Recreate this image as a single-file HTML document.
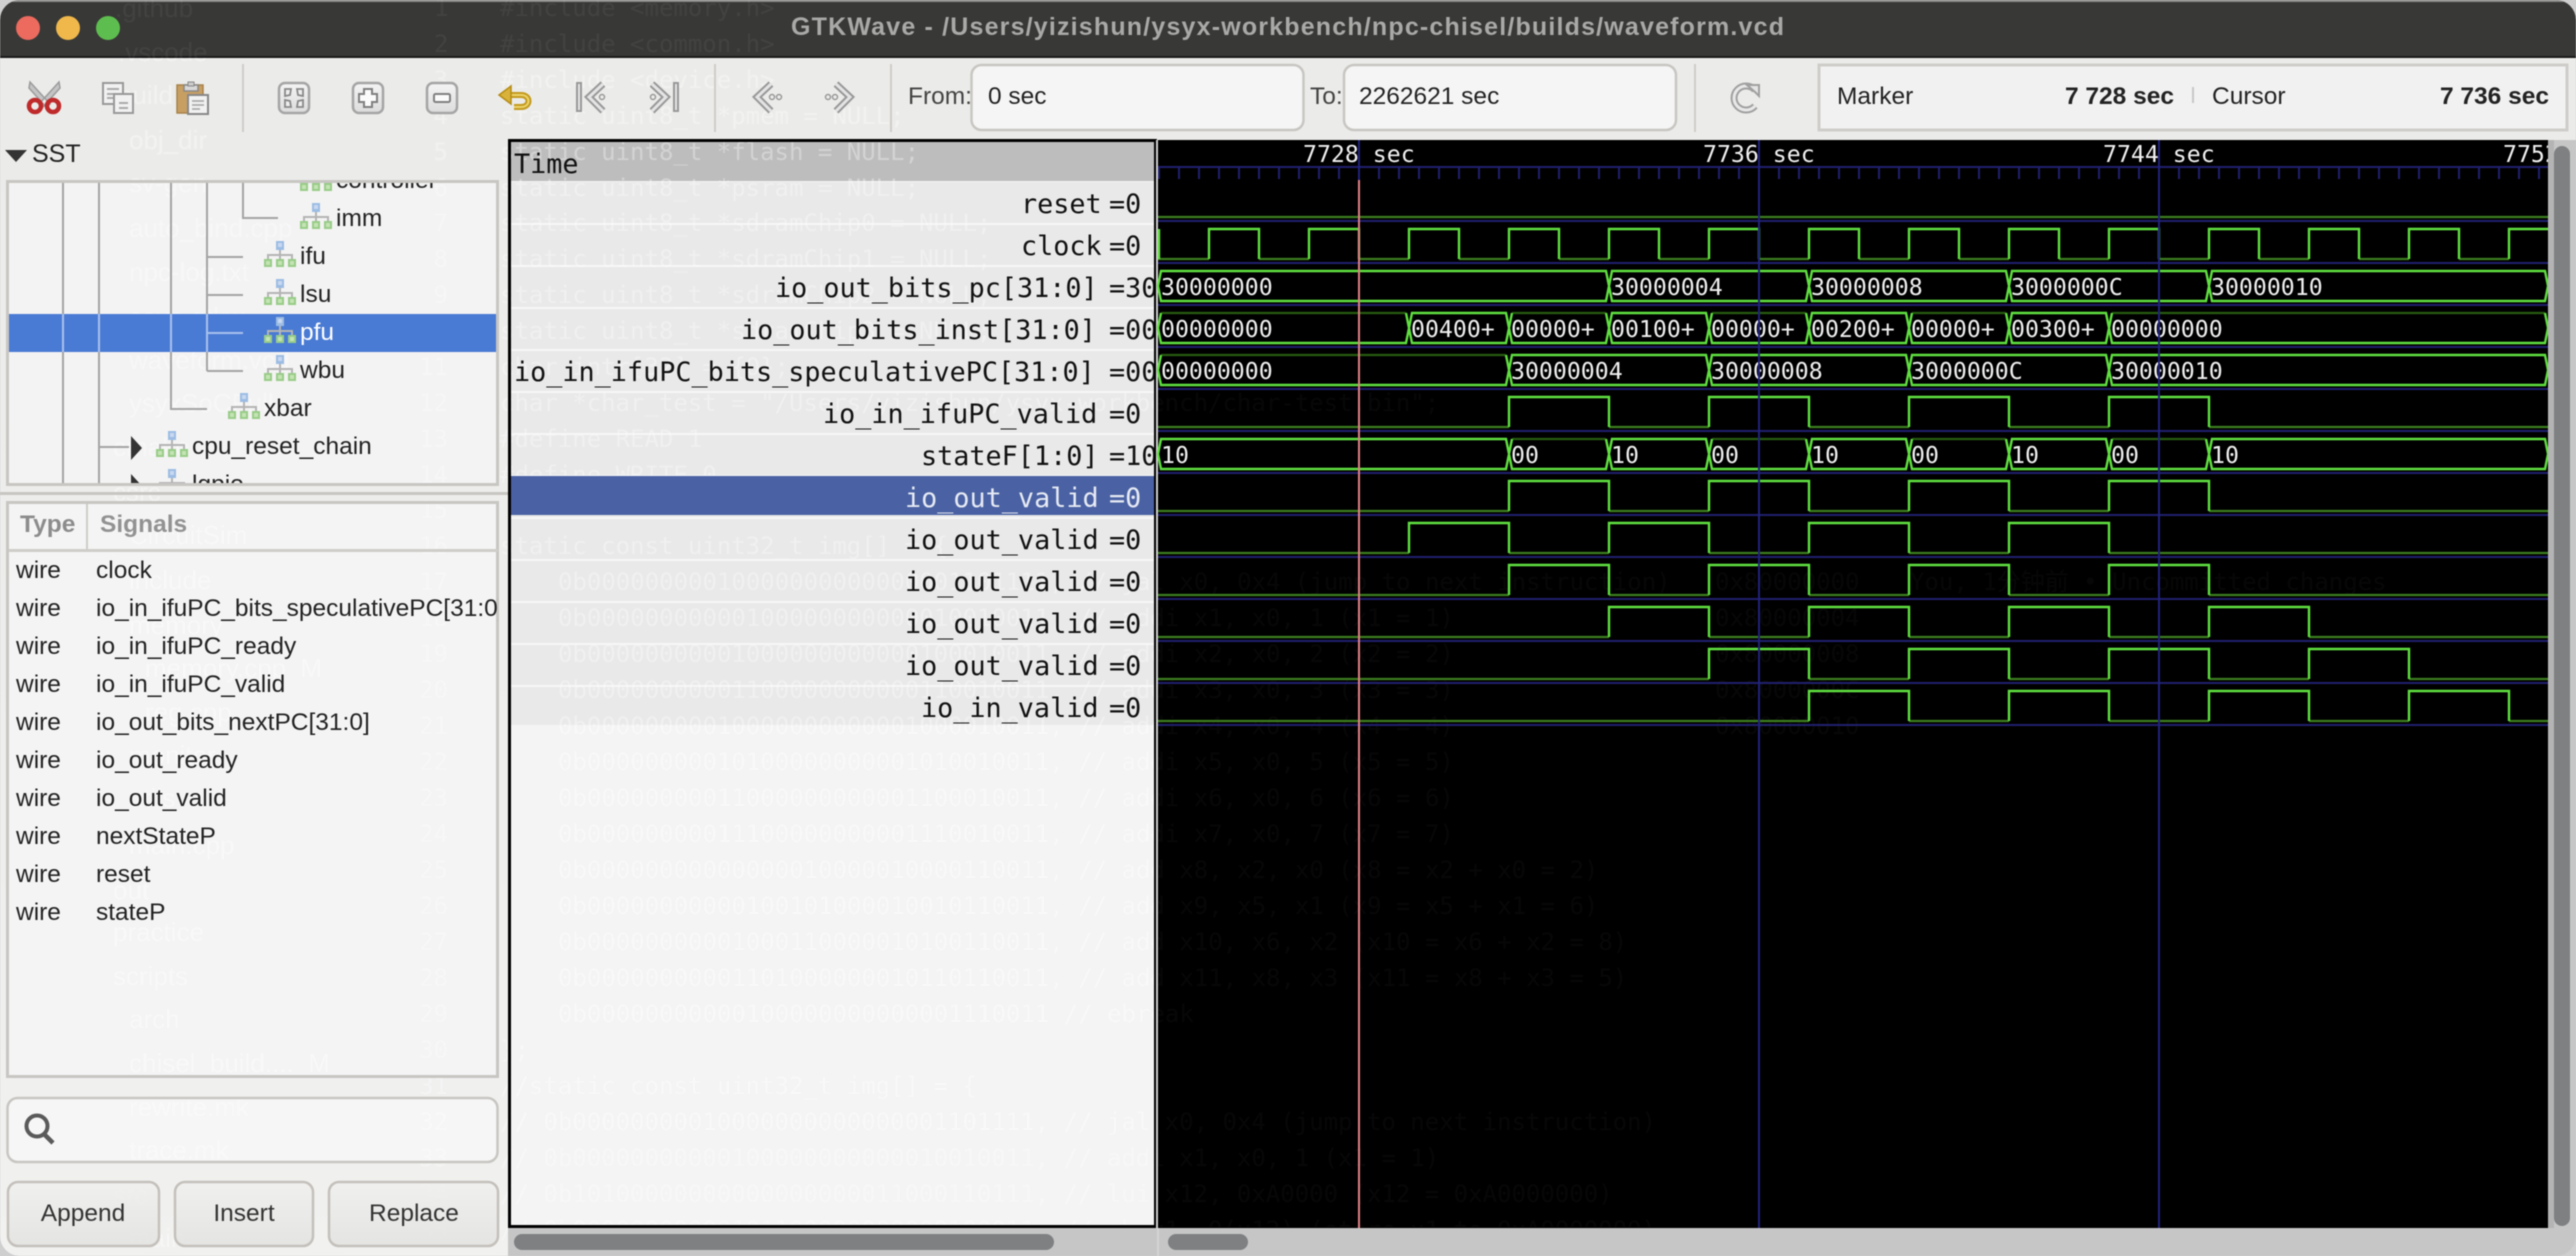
<!DOCTYPE html>
<html><head><meta charset="utf-8"><title>GTKWave</title>
<style>
html,body{margin:0;padding:0;background:#cfcfcf;width:2576px;height:1256px;overflow:hidden}
svg{display:block;filter:blur(.45px)}
.s{font-family:"Liberation Sans",sans-serif;font-size:24.5px;fill:#222}
.m{font-family:"DejaVu Sans Mono",monospace;font-size:26.8px;fill:#111}
.v{font-family:"DejaVu Sans Mono",monospace;font-size:23.2px;fill:#f0f0f0}
.g{font-family:"DejaVu Sans Mono",monospace;font-size:24px;white-space:pre}
.f{font-family:"Liberation Sans",sans-serif;font-size:26px}
</style></head><body>
<svg width="2576" height="1256" viewBox="0 0 2576 1256" xmlns="http://www.w3.org/2000/svg">
<defs>
<linearGradient id="btn" x1="0" y1="0" x2="0" y2="1"><stop offset="0" stop-color="#f0f0ef"/><stop offset="1" stop-color="#e2e2e0"/></linearGradient>
<linearGradient id="ib" x1="0" y1="0" x2="0" y2="1"><stop offset="0" stop-color="#f4f4f4"/><stop offset="1" stop-color="#dcdcdc"/></linearGradient>
<linearGradient id="win" x1="0" y1="0" x2="0" y2="1"><stop offset="0" stop-color="#ebebe9"/><stop offset=".6" stop-color="#eeeeed"/><stop offset="1" stop-color="#f1f1f0"/></linearGradient>
<clipPath id="cw"><rect x="0" y="0" width="2576" height="1256" rx="20"/></clipPath>
<clipPath id="ct"><rect x="9" y="182" width="489" height="302"/></clipPath>
<clipPath id="cs"><rect x="9" y="504" width="489" height="572"/></clipPath>
<clipPath id="cl"><rect x="511" y="142" width="643" height="1084"/></clipPath>
<clipPath id="ca"><rect x="0" y="58" width="1154" height="1198"/></clipPath>
<clipPath id="cb"><rect x="1158" y="180" width="1390" height="1047"/></clipPath>
<clipPath id="cc"><rect x="1158" y="140" width="1390" height="40"/></clipPath>
<g id="ti">
<path d="M16 9V14M4 18V14H28V18M16 14V18" fill="none" stroke="#b4b4b4" stroke-width="2"/>
<rect x="12" y="0" width="8" height="9" fill="#9cbce4"/><rect x="14" y="2" width="4" height="4" fill="#c8d8f0"/>
<rect x="0" y="18" width="8" height="8" fill="#98cc88"/><rect x="12" y="18" width="8" height="8" fill="#98cc88"/><rect x="24" y="18" width="8" height="8" fill="#98cc88"/>
<rect x="2" y="20" width="4" height="4" fill="#c4e4b4"/><rect x="14" y="20" width="4" height="4" fill="#c4e4b4"/><rect x="26" y="20" width="4" height="4" fill="#c4e4b4"/>
</g>
</defs>
<g clip-path="url(#cw)">
<!-- window base -->
<rect width="2576" height="1256" fill="url(#win)"/>
<!-- boxes backgrounds -->
<rect x="7.5" y="181.5" width="490" height="303" fill="#f3f3f3"/>
<rect x="7.5" y="502.5" width="490" height="574" fill="#f4f4f4"/>
<rect x="7.5" y="1098" width="490" height="64" rx="10" fill="#f6f6f6"/>
<rect x="971.5" y="65" width="332" height="65" rx="10" fill="#f5f5f5"/>
<rect x="1344" y="65" width="332" height="65" rx="10" fill="#f5f5f5"/>
<rect x="1819" y="65" width="748" height="65" fill="#f1f1f1"/>
<!-- signal list backgrounds -->
<rect x="511" y="142" width="643" height="1084" fill="#f4f4f4"/>
<rect x="511" y="142" width="643" height="39" fill="#bdbdbd"/>
<rect x="511" y="182" width="643" height="543" fill="#e9e9e9"/>
<path d="M511 224H1154M511 266H1154M511 308H1154M511 350H1154M511 392H1154M511 434H1154M511 476H1154M511 518H1154M511 560H1154M511 602H1154M511 644H1154M511 686H1154" stroke="#f6f6f6" stroke-width="2"/>
<!-- ghost: background window showing through -->
<g class="f" fill="#fff" opacity=".38" clip-path="url(#ca)">
<text x="118" y="61">.vscode</text><text x="118" y="104">build</text><text x="129" y="149">obj_dir</text><text x="129" y="192">sv-gen</text><text x="129" y="237">auto_bind.cpp</text><text x="129" y="281">npc-log.txt</text><text x="129" y="326">save.gtkw</text><text x="129" y="369">waveform.vcd</text><text x="129" y="412">ysyxSoCFull</text><text x="113" y="456">cmake</text><text x="113" y="501">csrc</text><text x="129" y="544">CircuitSim</text><text x="129" y="589">include</text><text x="129" y="634">memory</text><text x="145" y="677">memory.cpp&#160;&#160;M</text><text x="145" y="721">reg.cpp</text><text x="129" y="764">monitor</text><text x="129" y="807">utils</text><text x="129" y="854">main.cpp</text><text x="113" y="899">out</text><text x="113" y="941">practice</text><text x="113" y="985">scripts</text><text x="129" y="1028">arch</text><text x="129" y="1072">chisel_build....&#160;&#160;M</text><text x="129" y="1116">rewrite.mk</text><text x="129" y="1159">trace.mk</text><text x="113" y="1204">src</text><text x="129" y="1247">main</text>
</g>
<g class="g" fill="#fff" opacity=".3" clip-path="url(#ca)" text-anchor="end">
<text x="448" y="88">3</text><text x="448" y="124">4</text><text x="448" y="160">5</text><text x="448" y="196">6</text><text x="448" y="231">7</text><text x="448" y="267">8</text><text x="448" y="303">9</text><text x="448" y="339">10</text><text x="448" y="375">11</text><text x="448" y="411">12</text><text x="448" y="447">13</text><text x="448" y="483">14</text><text x="448" y="518">15</text><text x="448" y="554">16</text><text x="448" y="590">17</text><text x="448" y="626">18</text><text x="448" y="662">19</text><text x="448" y="698">20</text><text x="448" y="734">21</text><text x="448" y="770">22</text><text x="448" y="806">23</text><text x="448" y="842">24</text><text x="448" y="878">25</text><text x="448" y="914">26</text><text x="448" y="950">27</text><text x="448" y="986">28</text><text x="448" y="1022">29</text><text x="448" y="1058">30</text><text x="448" y="1094">31</text><text x="448" y="1130">32</text><text x="448" y="1166">33</text><text x="448" y="1202">34</text><text x="448" y="1238">35</text>
</g>
<g class="g" fill="#fff" opacity=".34" clip-path="url(#ca)">
<text x="500" y="88">#include &lt;device.h&gt;</text><text x="500" y="124">static uint8_t *pmem = NULL;</text><text x="500" y="160">static uint8_t *flash = NULL;</text><text x="500" y="196">static uint8_t *psram = NULL;</text><text x="500" y="231">static uint8_t *sdramChip0 = NULL;</text><text x="500" y="267">static uint8_t *sdramChip1 = NULL;</text><text x="500" y="303">static uint8_t *sdramChip2 = NULL;</text><text x="500" y="339">static uint8_t *sdramChip3 = NULL;</text><text x="500" y="375">char intr[32] = {0};</text><text x="500" y="411">char *char_test = "/Users/yizishun/ysyx-workbench/char-test.bin";</text><text x="500" y="447">#define READ 1</text><text x="500" y="483">#define WRITE 0</text><text x="500" y="554">static const uint32_t img[] = {</text>
<text x="558" y="590">0b00000000010000000000000001101111, // jal x0, 0x4</text><text x="558" y="626">0b00000000000100000000000010010011, // addi x1, x0, 1</text><text x="558" y="662">0b00000000001000000000000100010011, // addi x2, x0, 2</text><text x="558" y="698">0b00000000001100000000000110010011, // addi x3, x0, 3</text><text x="558" y="734">0b00000000010000000000001000010011, // addi x4, x0, 4</text><text x="558" y="770">0b00000000010100000000001010010011, // addi x5, x0, 5</text><text x="558" y="806">0b00000000011000000000001100010011, // addi x6, x0, 6</text><text x="558" y="842">0b00000000011100000000001110010011, // addi x7, x0, 7</text><text x="558" y="878">0b00000000000000010000010000110011, // add  x8, x2, x0</text><text x="558" y="914">0b00000000000100101000010010110011, // add  x9, x5, x1</text><text x="558" y="950">0b00000000001000110000010100110011, // add x10, x6, x2</text><text x="558" y="986">0b00000000001101000000010110110011, // add x11, x8, x3</text><text x="558" y="1022">0b00000000000100000000000001110011  // ebreak</text><text x="500" y="1058">};</text><text x="500" y="1094">//static const uint32_t img[] = {</text><text x="500" y="1130">//    0b00000000010000000000000001101111, // jal x0, 0x4</text><text x="500" y="1166">//    0b00000000000100000000000010010011, // addi x1, x0</text><text x="500" y="1202">//    0b10100000000000000000011000110111, // lui x12</text><text x="500" y="1238">//    0b00000000000101100000000000100011, // sb x1, 0(x12)</text>
</g>
<!-- title bar -->
<rect x="0" y="0" width="2576" height="58" fill="#383836"/>
<rect x="0" y="0" width="2576" height="2" fill="#8b8b8a"/>
<rect x="0" y="56" width="2576" height="2" fill="#1a1a1a"/>
<g fill="#fff" opacity=".05">
<text class="f" x="115" y="17" style="fill:#fff">.github</text><text class="f" x="118" y="61" style="fill:#fff">.vscode</text>
<text class="g" x="500" y="16">#include &lt;memory.h&gt;</text><text class="g" x="500" y="52">#include &lt;common.h&gt;</text><text class="g" x="434" y="16">1</text><text class="g" x="434" y="52">2</text>
</g>
<circle cx="28" cy="28" r="12" fill="#ec6a5e"/><circle cx="68" cy="28" r="12" fill="#f0b84b"/><circle cx="108" cy="28" r="12" fill="#5dbe4f"/>
<text x="791" y="35" font-family="Liberation Sans,sans-serif" font-size="25" font-weight="bold" fill="#a9a9a7" textLength="993">GTKWave - /Users/yizishun/ysyx-workbench/npc-chisel/builds/waveform.vcd</text>
<!-- toolbar separators -->
<path d="M243 64V132M715 64V132M891 64V132M1695 64V132" stroke="#cfcdc9" stroke-width="2"/>
<!-- scissors -->
<path d="M30 82L50 104L46 107L29 88ZM59 82L39 104L43 107L60 88Z" fill="#c4c4c4" stroke="#9b9b9b" stroke-width="1.5"/>
<circle cx="35" cy="106" r="6" fill="none" stroke="#bf2a2b" stroke-width="4.5"/><circle cx="53" cy="106" r="6" fill="none" stroke="#bf2a2b" stroke-width="4.5"/>
<!-- copy -->
<rect x="103" y="83" width="20" height="21" fill="#f1f1f1" stroke="#999" stroke-width="2"/><path d="M107 89H119M107 94H119M107 98H115" stroke="#aaa" stroke-width="2"/>
<rect x="114" y="94" width="19" height="19" fill="#f1f1f1" stroke="#999" stroke-width="2"/><path d="M119 103H128M119 108H128" stroke="#aaa" stroke-width="2"/>
<!-- paste -->
<rect x="177" y="85" width="26" height="28" fill="#c79f62" stroke="#a8824a" stroke-width="1.5"/><rect x="188" y="95" width="20" height="19" fill="#f1f1f1" stroke="#888" stroke-width="2"/><path d="M192 101H204M192 105H204M192 109H200" stroke="#aaa" stroke-width="1.8"/><rect x="184" y="85" width="14" height="6" fill="#d8d8d8" stroke="#888" stroke-width="1.5"/><rect x="188" y="82" width="6" height="4" fill="#ccc" stroke="#888"/>
<!-- zoom fit / in / out -->
<rect x="279" y="83" width="30" height="30" rx="6" fill="url(#ib)" stroke="#a5a5a5" stroke-width="2.5"/>
<path d="M285 89H291L290 95L285 96ZM303 89H297L298 95L303 96ZM285 107H291L290 101L285 100ZM303 107H297L298 101L303 100Z" fill="#eee" stroke="#888" stroke-width="1.8"/>
<rect x="353" y="83" width="30" height="30" rx="6" fill="url(#ib)" stroke="#a5a5a5" stroke-width="2.5"/>
<path d="M364 89H372V94H377V102H372V107H364V102H359V94H364Z" fill="#fbfbfb" stroke="#808080" stroke-width="2"/>
<rect x="427" y="83" width="30" height="30" rx="6" fill="url(#ib)" stroke="#a5a5a5" stroke-width="2.5"/>
<rect x="434" y="94" width="16" height="8" rx="1.5" fill="#fbfbfb" stroke="#808080" stroke-width="2"/>
<!-- undo -->
<path d="M505 95H521C531 95 531 107 521 107H514" fill="none" stroke="#c39a1e" stroke-width="6"/><path d="M505 95H521C531 95 531 107 521 107H514" fill="none" stroke="#ecd36a" stroke-width="2"/>
<path d="M499 95L511 86V104Z" fill="#d8b23a" stroke="#b58c14" stroke-width="1.5"/>
<!-- skip / nav -->
<g fill="none" stroke-linejoin="miter">
<path d="M579 82V112" stroke="#999" stroke-width="6"/><path d="M579 84V110" stroke="#e4e4e4" stroke-width="2"/>
<path d="M603 84L589 97L603 111" stroke="#999" stroke-width="7"/><path d="M603 84L589 97L603 111" stroke="#e4e4e4" stroke-width="3"/><circle cx="602" cy="97" r="2.5" stroke="#999" stroke-width="1.5"/>
<path d="M676 82V112" stroke="#999" stroke-width="6"/><path d="M676 84V110" stroke="#e4e4e4" stroke-width="2"/>
<path d="M652 84L666 97L652 111" stroke="#999" stroke-width="7"/><path d="M652 84L666 97L652 111" stroke="#e4e4e4" stroke-width="3"/><circle cx="653" cy="97" r="2.5" stroke="#999" stroke-width="1.5"/>
<path d="M771 84L757 97L771 111" stroke="#999" stroke-width="7"/><path d="M771 84L757 97L771 111" stroke="#e4e4e4" stroke-width="3"/><circle cx="772" cy="97" r="2.5" stroke="#999" stroke-width="1.5"/><circle cx="779" cy="97" r="2.5" stroke="#999" stroke-width="1.5"/>
<path d="M836 84L850 97L836 111" stroke="#999" stroke-width="7"/><path d="M836 84L850 97L836 111" stroke="#e4e4e4" stroke-width="3"/><circle cx="835" cy="97" r="2.5" stroke="#999" stroke-width="1.5"/><circle cx="828" cy="97" r="2.5" stroke="#999" stroke-width="1.5"/>
<path d="M1755 90A12 12 0 1 0 1755 106" stroke="#a0a0a0" stroke-width="7"/><path d="M1755 90A12 12 0 1 0 1755 106" stroke="#e8e8e8" stroke-width="3"/>
<path d="M1747 85H1759V96L1755 92Z" fill="#e4e4e4" stroke="#a0a0a0" stroke-width="2"/>
</g>
<!-- From / To -->
<rect x="971.5" y="65" width="332" height="65" rx="10" fill="none" stroke="#c8c6c2" stroke-width="2.5"/>
<rect x="1344" y="65" width="332" height="65" rx="10" fill="none" stroke="#c8c6c2" stroke-width="2.5"/>
<text class="s" x="908" y="104" style="fill:#444">From:</text><text class="s" x="988" y="104">0 sec</text>
<text class="s" x="1310" y="104" style="fill:#444">To:</text><text class="s" x="1359" y="104">2262621 sec</text>
<!-- Marker box -->
<rect x="1819" y="65" width="748" height="65" fill="none" stroke="#cfcdc9" stroke-width="3"/>
<text class="s" x="1837" y="104">Marker</text><text class="s" x="2174" y="104" text-anchor="end" font-weight="bold">7 728 sec</text>
<path d="M2193 87V103" stroke="#c8c8c8" stroke-width="2"/>
<text class="s" x="2212" y="104">Cursor</text><text class="s" x="2549" y="104" text-anchor="end" font-weight="bold">7 736 sec</text>
<!-- SST -->
<path d="M5 150H27L16 162Z" fill="#333"/>
<text class="s" x="32" y="162" style="font-size:25px">SST</text>
<!-- tree -->
<g clip-path="url(#ct)">
<path d="M63 180V486M99 180V486M171 180V409H207M207 180V371M243 180V218H278M207 257H243M207 295H243M207 371H243M99 447H129" fill="none" stroke="#a4a4a4" stroke-width="2"/>
<rect x="9" y="314" width="489" height="38" fill="#4a7bd4"/>
<path d="M63 314V352M99 314V352M171 314V352M207 314V352M207 333H243" fill="none" stroke="#a8c0ec" stroke-width="2"/>
<use href="#ti" x="300" y="165"/><text class="s" x="336" y="188">controller</text>
<use href="#ti" x="300" y="203"/><text class="s" x="336" y="226">imm</text>
<use href="#ti" x="264" y="241"/><text class="s" x="300" y="264">ifu</text>
<use href="#ti" x="264" y="279"/><text class="s" x="300" y="302">lsu</text>
<use href="#ti" x="264" y="317"/><text class="s" x="300" y="340" style="fill:#fff">pfu</text>
<use href="#ti" x="264" y="355"/><text class="s" x="300" y="378">wbu</text>
<use href="#ti" x="228" y="393"/><text class="s" x="264" y="416">xbar</text>
<path d="M131 436L142 448L131 460Z" fill="#333"/><use href="#ti" x="156" y="431"/><text class="s" x="192" y="454">cpu_reset_chain</text>
<path d="M131 474L142 486L131 498Z" fill="#333"/><use href="#ti" x="156" y="469"/><text class="s" x="192" y="492">lgpio</text>
</g>
<rect x="7.5" y="181.5" width="490" height="303" fill="none" stroke="#c8c6c2" stroke-width="3"/>
<rect x="0" y="492" width="508" height="3" fill="#c8c6c2"/>
<!-- signals -->
<rect x="7.5" y="502.5" width="490" height="574" fill="none" stroke="#c8c6c2" stroke-width="3"/>
<rect x="9" y="549" width="489" height="3" fill="#cfcdc9"/><rect x="86" y="504" width="2" height="46" fill="#cfcdc9"/>
<text class="s" x="20" y="532" font-weight="bold" style="fill:#8c8c8c">Type</text><text class="s" x="100" y="532" font-weight="bold" style="fill:#929292">Signals</text>
<g clip-path="url(#cs)">
<text class="s" x="16" y="578">wire</text><text class="s" x="96" y="578">clock</text>
<text class="s" x="16" y="616">wire</text><text class="s" x="96" y="616">io_in_ifuPC_bits_speculativePC[31:0]</text>
<text class="s" x="16" y="654">wire</text><text class="s" x="96" y="654">io_in_ifuPC_ready</text>
<text class="s" x="16" y="692">wire</text><text class="s" x="96" y="692">io_in_ifuPC_valid</text>
<text class="s" x="16" y="730">wire</text><text class="s" x="96" y="730">io_out_bits_nextPC[31:0]</text>
<text class="s" x="16" y="768">wire</text><text class="s" x="96" y="768">io_out_ready</text>
<text class="s" x="16" y="806">wire</text><text class="s" x="96" y="806">io_out_valid</text>
<text class="s" x="16" y="844">wire</text><text class="s" x="96" y="844">nextStateP</text>
<text class="s" x="16" y="882">wire</text><text class="s" x="96" y="882">reset</text>
<text class="s" x="16" y="920">wire</text><text class="s" x="96" y="920">stateP</text>
</g>
<!-- search -->
<rect x="7.5" y="1098" width="490" height="64" rx="10" fill="none" stroke="#c8c6c2" stroke-width="2.5"/>
<circle cx="37" cy="1126" r="10.5" fill="none" stroke="#5a5a5a" stroke-width="4"/><path d="M45 1135L53 1143" stroke="#5a5a5a" stroke-width="4.5"/>
<!-- buttons -->
<rect x="8" y="1182" width="151" height="64" rx="10" fill="url(#btn)" fill-opacity=".85" stroke="#c4c0bb" stroke-width="2.5"/>
<rect x="175" y="1182" width="138" height="64" rx="10" fill="url(#btn)" fill-opacity=".85" stroke="#c4c0bb" stroke-width="2.5"/>
<rect x="329" y="1182" width="169" height="64" rx="10" fill="url(#btn)" fill-opacity=".85" stroke="#c4c0bb" stroke-width="2.5"/>
<text class="s" x="83" y="1221" text-anchor="middle" style="fill:#333">Append</text><text class="s" x="244" y="1221" text-anchor="middle" style="fill:#333">Insert</text><text class="s" x="414" y="1221" text-anchor="middle" style="fill:#333">Replace</text>
<!-- list -->
<rect x="511" y="476" width="643" height="39" fill="#4a62a3"/>
<g clip-path="url(#cl)">
<text class="m" x="514" y="173">Time</text>
<text class="m" x="1021" y="213">reset</text><text class="m" x="1109" y="213">=0</text>
<text class="m" x="1021" y="255">clock</text><text class="m" x="1109" y="255">=0</text>
<text class="m" x="775" y="297">io_out_bits_pc[31:0]</text><text class="m" x="1109" y="297">=30000000</text>
<text class="m" x="741" y="339">io_out_bits_inst[31:0]</text><text class="m" x="1109" y="339">=00000000</text>
<text class="m" x="514" y="381">io_in_ifuPC_bits_speculativePC[31:0]</text><text class="m" x="1109" y="381">=00000000</text>
<text class="m" x="823" y="423">io_in_ifuPC_valid</text><text class="m" x="1109" y="423">=0</text>
<text class="m" x="921" y="465">stateF[1:0]</text><text class="m" x="1109" y="465">=10</text>
<text class="m" x="905" y="507" style="fill:#e6eaf4">io_out_valid</text><text class="m" x="1109" y="507" style="fill:#e6eaf4">=0</text>
<text class="m" x="905" y="549">io_out_valid</text><text class="m" x="1109" y="549">=0</text>
<text class="m" x="905" y="591">io_out_valid</text><text class="m" x="1109" y="591">=0</text>
<text class="m" x="905" y="633">io_out_valid</text><text class="m" x="1109" y="633">=0</text>
<text class="m" x="905" y="675">io_out_valid</text><text class="m" x="1109" y="675">=0</text>
<text class="m" x="921" y="717">io_in_valid</text><text class="m" x="1109" y="717">=0</text>
</g>
<rect x="509.5" y="140.5" width="646" height="1086" fill="none" stroke="#000" stroke-width="3"/>
<rect x="1156" y="140" width="2" height="1088" fill="#cfcfcf"/>
<!-- wave -->
<rect x="1158" y="140" width="1390" height="1088" fill="#000"/>
<g class="g" fill="#fff" opacity=".028" clip-path="url(#cb)">
<text x="500" y="411">char *char_test = "/Users/yizishun/ysyx-workbench/char-test.bin";</text>
<text x="558" y="590">0b00000000010000000000000001101111, // jal x0, 0x4 (jump to next instruction)</text><text x="1715" y="590">0x80000000</text><text x="1910" y="590">You, 1分钟前 • Uncommitted changes</text>
<text x="558" y="626">0b00000000000100000000000010010011, // addi x1, x0, 1 (x1 = 1)</text><text x="1715" y="626">0x80000004</text>
<text x="558" y="662">0b00000000001000000000000100010011, // addi x2, x0, 2 (x2 = 2)</text><text x="1715" y="662">0x80000008</text>
<text x="558" y="698">0b00000000001100000000000110010011, // addi x3, x0, 3 (x3 = 3)</text><text x="1715" y="698">0x8000000C</text>
<text x="558" y="734">0b00000000010000000000001000010011, // addi x4, x0, 4 (x4 = 4)</text><text x="1715" y="734">0x80000010</text>
<text x="558" y="770">0b00000000010100000000001010010011, // addi x5, x0, 5 (x5 = 5)</text>
<text x="558" y="806">0b00000000011000000000001100010011, // addi x6, x0, 6 (x6 = 6)</text>
<text x="558" y="842">0b00000000011100000000001110010011, // addi x7, x0, 7 (x7 = 7)</text>
<text x="558" y="878">0b00000000000000010000010000110011, // add  x8, x2, x0 (x8 = x2 + x0 = 2)</text>
<text x="558" y="914">0b00000000000100101000010010110011, // add  x9, x5, x1 (x9 = x5 + x1 = 6)</text>
<text x="558" y="950">0b00000000001000110000010100110011, // add x10, x6, x2 (x10 = x6 + x2 = 8)</text>
<text x="558" y="986">0b00000000001101000000010110110011, // add x11, x8, x3 (x11 = x8 + x3 = 5)</text>
<text x="558" y="1022">0b00000000000100000000000001110011  // ebreak</text>
<text x="500" y="1130">//    0b00000000010000000000000001101111, // jal x0, 0x4 (jump to next instruction)</text>
<text x="500" y="1166">//    0b00000000000100000000000010010011, // addi x1, x0, 1 (x1 = 1)</text>
<text x="500" y="1202">//    0b10100000000000000000011000110111, // lui  x12, 0xA0000 (x12 = 0xA0000000)</text>
<text x="500" y="1238">//    0b00000000000101100000000000100011, // sb   x1, 0(x12) (store x1 to 0xA0000000)</text>
</g>
<g clip-path="url(#cc)">
<text class="v" x="1303" y="162">7728 sec</text><text class="v" x="1703" y="162">7736 sec</text><text class="v" x="2103" y="162">7744 sec</text><text class="v" x="2503" y="162">7752 sec</text>
</g>
<!-- ruler -->
<path d="M1158 167H2548" stroke="#20206e" stroke-width="2"/>
<path d="M1158 173.5H2548" stroke="#20206e" stroke-width="11" stroke-dasharray="2 18"/>
<!-- row separators -->
<path d="M1158 221H2548M1158 263H2548M1158 305H2548M1158 347H2548M1158 389H2548M1158 431H2548M1158 473H2548M1158 515H2548M1158 557H2548M1158 599H2548M1158 641H2548M1158 683H2548M1158 725H2548" stroke="#20206e" stroke-width="2"/>
<!-- low / dark -->
<path fill="none" stroke="#3c7d1e" stroke-width="2.2" d="M1158 217H2548
M1158 259H1209M1259 259H1309M1359 259H1409M1459 259H1509M1559 259H1609M1659 259H1709M1759 259H1809M1859 259H1909M1959 259H2009M2059 259H2109M2159 259H2209M2259 259H2309M2359 259H2409M2459 259H2509
M1158 427H1509M1609 427H1709M1809 427H1909M2009 427H2109M2209 427H2548
M1158 511H1509M1609 511H1709M1809 511H1909M2009 511H2109M2209 511H2548
M1158 553H1409M1509 553H1609M1709 553H1809M1909 553H2009M2109 553H2548
M1158 595H1509M1609 595H1709M1809 595H1909M2009 595H2109M2209 595H2548
M1158 637H1609M1709 637H1809M1909 637H2009M2109 637H2209M2309 637H2548
M1158 679H1709M1809 679H1909M2009 679H2109M2209 679H2309M2409 679H2548
M1158 721H1809M1909 721H2009M2109 721H2209M2309 721H2409M2509 721H2548"/>
<path fill="none" stroke="#265c10" stroke-width="2.2" d="M1161 313H1406M1512 313H1606M1712 313H1806M1912 313H2006M2112 313H2545M1161 355H1506M1512 439H1606M1712 439H1806M1912 439H2006M2112 439H2206"/>
<!-- high / bright -->
<path fill="none" stroke="#5fdf3f" stroke-width="2.4" d="M1159 229V259
M1209 259V229H1259V259M1309 259V229H1359V259M1409 259V229H1459V259M1509 259V229H1559V259M1609 259V229H1659V259M1709 259V229H1759V259M1809 259V229H1859V259M1909 259V229H1959V259M2009 259V229H2059V259M2109 259V229H2159V259M2209 259V229H2259V259M2309 259V229H2359V259M2409 259V229H2459V259M2509 259V229H2548
M1509 427V397H1609V427M1709 427V397H1809V427M1909 427V397H2009V427M2109 427V397H2209V427
M1509 511V481H1609V511M1709 511V481H1809V511M1909 511V481H2009V511M2109 511V481H2209V511
M1409 553V523H1509V553M1609 553V523H1709V553M1809 553V523H1909V553M2009 553V523H2109V553
M1509 595V565H1609V595M1709 595V565H1809V595M1909 595V565H2009V595M2109 595V565H2209V595
M1609 637V607H1709V637M1809 637V607H1909V637M2009 637V607H2109V637M2209 637V607H2309V637
M1709 679V649H1809V679M1909 679V649H2009V679M2109 679V649H2209V679M2309 679V649H2409V679
M1809 721V691H1909V721M2009 721V691H2109V721M2209 721V691H2309V721M2409 721V691H2509V721
M1158 286L1161 271H1606L1612 301H1806L1812 271H2006L2012 301H2206L2212 271H2545L2548 286L2545 301H2212L2206 271H2012L2006 301H1812L1806 271H1612L1606 301H1161L1158 286
M1158 328L1161 343H1406L1412 313H1506L1512 343H1606L1612 313H1706L1712 343H1806L1812 313H1906L1912 343H2006L2012 313H2106L2112 343H2545L2548 328
M1406 313L1412 343H1506L1512 313M1606 313L1612 343H1706L1712 313M1806 313L1812 343H1906L1912 313M2006 313L2012 343H2106L2112 313M1158 328L1161 313M2545 313L2548 328
M1158 370L1161 385H1506L1512 355H1706L1712 385H1906L1912 355H2106L2112 385H2545L2548 370L2545 355H2112L2106 385H1912L1906 355H1712L1706 385H1512L1506 355M1158 370L1161 355
M1158 454L1161 439H1506L1512 469H1606L1612 439H1706L1712 469H1806L1812 439H1906L1912 469H2006L2012 439H2106L2112 469H2206L2212 439H2545L2548 454
M1158 454L1161 469H1506L1512 439M1606 439L1612 469H1706L1712 439M1806 439L1812 469H1906L1912 439M2006 439L2012 469H2106L2112 439M2206 439L2212 469H2545L2548 454"/>
<!-- values -->
<text class="v" x="1161" y="295">30000000</text><text class="v" x="1611" y="295">30000004</text><text class="v" x="1811" y="295">30000008</text><text class="v" x="2011" y="295">3000000C</text><text class="v" x="2211" y="295">30000010</text>
<text class="v" x="1161" y="337">00000000</text><text class="v" x="1411" y="337">00400+</text><text class="v" x="1511" y="337">00000+</text><text class="v" x="1611" y="337">00100+</text><text class="v" x="1711" y="337">00000+</text><text class="v" x="1811" y="337">00200+</text><text class="v" x="1911" y="337">00000+</text><text class="v" x="2011" y="337">00300+</text><text class="v" x="2111" y="337">00000000</text>
<text class="v" x="1161" y="379">00000000</text><text class="v" x="1511" y="379">30000004</text><text class="v" x="1711" y="379">30000008</text><text class="v" x="1911" y="379">3000000C</text><text class="v" x="2111" y="379">30000010</text>
<text class="v" x="1161" y="463">10</text><text class="v" x="1511" y="463">00</text><text class="v" x="1611" y="463">10</text><text class="v" x="1711" y="463">00</text><text class="v" x="1811" y="463">10</text><text class="v" x="1911" y="463">00</text><text class="v" x="2011" y="463">10</text><text class="v" x="2111" y="463">00</text><text class="v" x="2211" y="463">10</text>
<!-- cursors -->
<path d="M1359 140V180M1759 140V1228M2159 140V1228" stroke="#22227e" stroke-width="2"/>
<path d="M1359 180V1228" stroke="#e08084" stroke-width="2"/>
<!-- scrollbars -->
<rect x="2548" y="140" width="28" height="1116" fill="#c6c6c6"/><rect x="2548" y="140" width="6" height="1116" fill="#b4b4b4"/>
<rect x="2554" y="146" width="16" height="1080" rx="8" fill="#7e8082"/>
<rect x="508" y="1228" width="2068" height="28" fill="#c6c6c6"/><rect x="1157" y="1228" width="2" height="28" fill="#d4d4d4"/>
<rect x="514" y="1234" width="540" height="16" rx="8" fill="#7e8082"/>
<rect x="1168" y="1234" width="80" height="16" rx="8" fill="#7e8082"/>
</g>
</svg>
</body></html>
